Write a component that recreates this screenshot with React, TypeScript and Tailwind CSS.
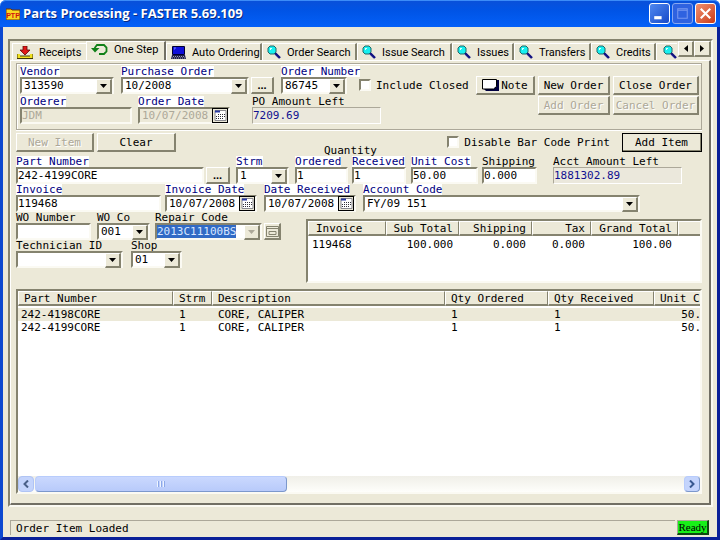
import type { ReactNode } from 'react';
import clsx from 'clsx';

const sunken = 'border-2 border-t-[#85836f] border-l-[#85836f] border-r-[#fbfaf3] border-b-[#fbfaf3]';
const raised = 'border-t border-l border-r-2 border-b-2 border-t-white border-l-white border-r-[#85836f] border-b-[#85836f]';

function SearchIcon() {
  return (
    <svg width="14" height="14" viewBox="0 0 14 14" className="shrink-0">
      <path d="M8 8l5 5" stroke="#101080" strokeWidth="2.4" />
      <path d="M7 9l4.500 4.500" stroke="#8a8ac0" strokeWidth="0.8" />
      <path d="M3 1h4l2 2v4L7 9H3L1 7V3z" fill="#18f0f0" stroke="#206868" />
      <path d="M3 3h2v1H4v1H3z" fill="#d8ffff" />
    </svg>
  );
}

function ReceiptIcon() {
  return (
    <svg width="16" height="13" viewBox="0 0 16 13" className="shrink-0">
      <path d="M0 8h3v2h10V8h3v5H0z" fill="#f0e020" />
      <path d="M0 12.500h16V8M0 8v4M3 10h10" stroke="#403808" fill="none" />
      <path d="M6 0h4v4h3L8 9 3 4h3z" fill="#e01818" stroke="#600808" strokeWidth="0.8" />
    </svg>
  );
}

function RefreshIcon() {
  return (
    <svg width="17" height="13" viewBox="0 0 17 13" className="shrink-0">
      <path d="M4 6.500V4.500l2-2.500h7l2.500 2.500v4L13 11H8" fill="none" stroke="#108018" strokeWidth="1.8" />
      <path d="M0 5h8.500L4 9.500z" fill="#108018" />
    </svg>
  );
}

function ComputerIcon() {
  return (
    <svg width="15" height="13" viewBox="0 0 15 13" className="shrink-0">
      <path d="M1.500.5h12v8h-12z" fill="#1010d8" stroke="#000030" />
      <path d="M3 2h2M3 3h1" stroke="#7080ff" />
      <path d="M1 9h13l1 4H0z" fill="#202048" />
      <path d="M2 10.500h11M1 12h13" stroke="#a0a0b8" strokeDasharray="1 1" />
    </svg>
  );
}

function CalendarIcon() {
  return (
    <svg width="13" height="11" viewBox="0 0 13 11">
      <path d="M1 .5h11v10H1z" fill="#fff" stroke="#8a8a90" />
      <path d="M1 1.500h5" stroke="#2838a0" strokeWidth="2" />
      <path d="M4 4.500h8M2 6.500h10M2 8.500h7" stroke="#303038" strokeDasharray="1 1" />
    </svg>
  );
}

function DropArrow({ disabled }: { disabled?: boolean }) {
  return (
    <span className={clsx('pointer-events-none absolute top-0.5 right-0.5 bottom-0 flex w-4 items-center justify-center bg-[#ece9d8]', raised)}>
      <svg width="7" height="4" viewBox="0 0 7 4">
        <path d="M0 0h7L3.500 4z" fill={disabled ? '#aca899' : '#000'} />
      </svg>
    </span>
  );
}

type FieldProps = { id: string; label: string; width: string; required?: boolean; children?: ReactNode };

function Field({ id, label, width, required, children }: FieldProps) {
  return (
    <div className={clsx('flex shrink-0 flex-col items-start', width)}>
      <label htmlFor={id} className={clsx('h-[11px] whitespace-nowrap', required && 'bg-white text-[#000080]')}>
        {label}
      </label>
      <div className="flex w-full">{children}</div>
    </div>
  );
}

function TextBox({ id, value, look = 'normal' }: { id: string; value?: string; look?: 'normal' | 'disabled' | 'amount' }) {
  return (
    <input
      id={id}
      defaultValue={value}
      disabled={look === 'disabled'}
      readOnly={look === 'amount'}
      className={clsx(
        'h-[17px] w-full min-w-0 outline-none',
        look === 'normal' && ['bg-white', sunken],
        look === 'disabled' && ['bg-[#ece9d8] text-[#aca899]', sunken],
        look === 'amount' && 'border border-t-[#aca899] border-l-[#aca899] border-r-white border-b-white bg-[#ebe8dc] text-[#101090]',
      )}
    />
  );
}

function Select({ id, value, selected }: { id: string; value: string; selected?: boolean }) {
  return (
    <div className="relative w-full">
      <select
        id={id}
        disabled={selected}
        className={clsx('block h-[17px] w-full appearance-none bg-white pl-0.5 opacity-100 outline-none', sunken)}
      >
        <option>{selected ? '' : value}</option>
      </select>
      {selected && (
        <span className="pointer-events-none absolute top-0.5 left-0.5 bg-[#316ac5] text-[#d8e6ff] leading-[13px]">{value}</span>
      )}
      <DropArrow disabled={selected} />
    </div>
  );
}

function DateBox({ id, value, disabled }: { id: string; value: string; disabled?: boolean }) {
  return (
    <div className={clsx('flex h-[17px] w-full items-center', sunken, disabled ? 'bg-[#ece9d8]' : 'bg-white')}>
      <input
        id={id}
        defaultValue={value}
        disabled={disabled}
        className={clsx('w-0 flex-1 pl-0.5 outline-none', disabled && 'text-[#aca899]')}
      />
      <button
        type="button"
        aria-label="Pick date"
        disabled={disabled}
        className="flex h-[15px] w-4 shrink-0 items-center justify-center border border-black bg-[#ece9d8]"
      >
        <CalendarIcon />
      </button>
    </div>
  );
}

type ButtonProps = { className?: string; disabled?: boolean; strong?: boolean; label?: string; children: ReactNode };

function Button({ className, disabled, strong, label, children }: ButtonProps) {
  return (
    <button
      type="button"
      disabled={disabled}
      aria-label={label}
      className={clsx(
        'flex shrink-0 items-center justify-center bg-[#ece9d8] whitespace-nowrap',
        raised,
        disabled && 'text-[#aca899] [text-shadow:1px_1px_0_#fff]',
        strong && 'outline outline-black -outline-offset-1',
        className,
      )}
    >
      {children}
    </button>
  );
}

function CheckBox({ label }: { label: string }) {
  return (
    <label className="flex h-[18px] shrink-0 items-center gap-[5px] whitespace-nowrap">
      <input type="checkbox" className={clsx('size-3 appearance-none bg-white', sunken)} />
      {label}
    </label>
  );
}

const tabs = [
  { name: 'Receipts', width: 'w-[74px]', icon: <ReceiptIcon /> },
  { name: 'One Step', width: 'w-[80px]', icon: <RefreshIcon />, active: true },
  { name: 'Auto Ordering', width: 'w-[96px]', icon: <ComputerIcon /> },
  { name: 'Order Search', width: 'w-[95px]', icon: <SearchIcon /> },
  { name: 'Issue Search', width: 'w-[95px]', icon: <SearchIcon /> },
  { name: 'Issues', width: 'w-[62px]', icon: <SearchIcon /> },
  { name: 'Transfers', width: 'w-[77px]', icon: <SearchIcon /> },
  { name: 'Credits', width: 'w-[65px]', icon: <SearchIcon /> },
];

function TabBar() {
  return (
    <div className="flex h-[19px] pl-0.5 font-['Roboto',sans-serif]">
      <div role="tablist" className="flex min-w-0 flex-1 items-end overflow-hidden">
        {tabs.map((tab) => (
          <button
            key={tab.name}
            type="button"
            role="tab"
            aria-selected={!!tab.active}
            className={clsx(
              'flex shrink-0 items-center gap-1.5 overflow-hidden border-t border-l border-white pl-1 whitespace-nowrap',
              tab.width,
              tab.active ? 'h-[19px] border-r-2 border-r-[#716f64] pb-1' : 'h-[17px]',
              !tab.active && tab.name !== 'Receipts' && 'border-r-2 border-r-[#85836f]',
            )}
          >
            {tab.icon}
            {tab.name}
          </button>
        ))}
        <button type="button" role="tab" aria-label="More" className="flex h-[17px] shrink-0 items-center border-t border-l border-white pl-1.5">
          <SearchIcon />
        </button>
      </div>
      <Button label="Scroll tabs left" className="h-4 w-4">
        <svg width="4" height="7" viewBox="0 0 4 7"><path d="M4 0v7L0 3.500z" /></svg>
      </Button>
      <Button label="Scroll tabs right" className="h-4 w-[17px]">
        <svg width="4" height="7" viewBox="0 0 4 7"><path d="M0 0v7l4-3.500z" /></svg>
      </Button>
    </div>
  );
}

function TitleBar() {
  return (
    <header className="flex h-[27px] items-center rounded-t-md bg-linear-to-b from-[#0a50d8] via-[#0054e6] via-40% to-[#0460f8] pr-1 pl-1.5 shadow-[inset_0_1px_0_#3c8cf8]">
      <svg width="14" height="12" viewBox="0 0 14 12">
        <path d="M0 1h5l1 1h8v10H0z" fill="#f8d820" stroke="#703008" />
        <text x="7" y="9.500" textAnchor="middle" fontSize="7" fontWeight="700" fontFamily="Liberation Sans" fill="#d01010">PTP</text>
      </svg>
      <h1 className="ml-[3px] flex-1 font-['Open_Sans',sans-serif] text-[13px] font-bold text-white [text-shadow:1px_1px_0_#0a2a80]">
        Parts Processing - FASTER 5.69.109
      </h1>
      <div className="flex gap-0.5">
        <button type="button" aria-label="Minimize" className="size-[21px] rounded-[3px] border border-white bg-linear-to-br from-[#5088f0] to-[#1848c8]">
          <svg viewBox="0 0 18 18"><path d="M4 13h7" stroke="#fff" strokeWidth="3" /></svg>
        </button>
        <button type="button" aria-label="Maximize" disabled className="size-[21px] rounded-[3px] border border-[#88a8f0] bg-[#2f62e0]">
          <svg viewBox="0 0 18 18"><path d="M4.500 4.500h9v9h-9zM4 6h10" fill="none" stroke="#7898f0" /></svg>
        </button>
        <button type="button" aria-label="Close" className="size-[21px] rounded-[3px] border border-white bg-linear-to-br from-[#f09070] to-[#c83810]">
          <svg viewBox="0 0 18 18"><path d="M4.500 4.500l9 9M13.500 4.500l-9 9" stroke="#fff" strokeWidth="2" /></svg>
        </button>
      </div>
    </header>
  );
}

function OrderBox() {
  return (
    <section className="flex justify-between border border-[#aca899] pr-0.5 pl-[3px] shadow-[inset_1px_1px_0_#fff,0_1px_0_#fff]">
      <div className="flex flex-col gap-0.5 pt-0.5 pb-[5px]">
        <div className="flex items-end">
          <Field id="vendor" label="Vendor" width="w-[94px] mr-[7px]" required>
            <Select id="vendor" value="313590" />
          </Field>
          <Field id="po" label="Purchase Order" width="w-[128px] mr-0.5" required>
            <Select id="po" value="10/2008" />
          </Field>
          <Button label="Find purchase order" className="mr-[7px] h-[17px] w-[23px] font-['Liberation_Sans',sans-serif] font-bold">...</Button>
          <Field id="order-number" label="Order Number" width="w-[66px] mr-3" required>
            <Select id="order-number" value="86745" />
          </Field>
          <CheckBox label="Include Closed" />
        </div>
        <div className="flex items-end">
          <Field id="orderer" label="Orderer" width="w-[112px] mr-1.5" required>
            <TextBox id="orderer" value="JDM" look="disabled" />
          </Field>
          <Field id="order-date" label="Order Date" width="w-[92px] mr-[22px]" required>
            <DateBox id="order-date" value="10/07/2008" disabled />
          </Field>
          <Field id="po-left" label="PO Amount Left" width="w-[129px]">
            <TextBox id="po-left" value="7209.69" look="amount" />
          </Field>
        </div>
      </div>
      <div className="grid grid-cols-[59px_72px_86px] grid-rows-[19px_19px] gap-x-[3px] gap-y-px pt-3">
        <Button className="gap-0.5">
          <svg width="17" height="12" viewBox="0 0 17 12">
            <path d="M2 1h15v11H4l-2-2z" fill="#000040" />
            <path d="M.5.5h14v7l-3 2.500H.5z" fill="#fff" stroke="#000" />
          </svg>
          Note
        </Button>
        <Button>New Order</Button>
        <Button>Close Order</Button>
        <Button className="col-start-2" disabled>Add Order</Button>
        <Button disabled>Cancel Order</Button>
      </div>
    </section>
  );
}

function ItemForm() {
  return (
    <section>
      <div className="mt-[3px] flex h-[19px] items-stretch">
        <Button className="mr-[3px] w-[78px]" disabled>New Item</Button>
        <Button className="w-[79px]">Clear</Button>
        <div className="mr-3 ml-auto flex">
          <CheckBox label="Disable Bar Code Print" />
        </div>
        <Button className="w-20" strong>Add Item</Button>
      </div>
      <div className="flex h-8 items-end">
        <Field id="part" label="Part Number" width="w-[188px] mr-0.5" required>
          <TextBox id="part" value="242-4199CORE" />
        </Field>
        <Button label="Find part" className="mr-1.5 h-[17px] w-6 font-['Liberation_Sans',sans-serif] font-bold">...</Button>
        <Field id="strm" label="Strm" width="w-[53px] mr-1.5" required>
          <Select id="strm" value="1" />
        </Field>
        <div className="mr-[5px] flex flex-col items-center">
          <span className="h-[11px]">Quantity</span>
          <div className="flex gap-1">
            <Field id="ordered" label="Ordered" width="w-[53px]" required>
              <TextBox id="ordered" value="1" />
            </Field>
            <Field id="received" label="Received" width="w-[54px]" required>
              <TextBox id="received" value="1" />
            </Field>
          </div>
        </div>
        <Field id="unit-cost" label="Unit Cost" width="w-[67px] mr-1" required>
          <TextBox id="unit-cost" value="50.00" />
        </Field>
        <Field id="shipping" label="Shipping" width="w-[55px] mr-4">
          <TextBox id="shipping" value="0.000" />
        </Field>
        <Field id="acct-left" label="Acct Amount Left" width="w-[129px]">
          <TextBox id="acct-left" value="1881302.89" look="amount" />
        </Field>
      </div>
      <div className="flex">
        <Field id="invoice" label="Invoice" width="w-[145px] mr-1" required>
          <TextBox id="invoice" value="119468" />
        </Field>
        <Field id="invoice-date" label="Invoice Date" width="w-[92px] mr-[7px]" required>
          <DateBox id="invoice-date" value="10/07/2008" />
        </Field>
        <Field id="date-received" label="Date Received" width="w-[92px] mr-[7px]" required>
          <DateBox id="date-received" value="10/07/2008" />
        </Field>
        <Field id="account" label="Account Code" width="w-[277px]" required>
          <Select id="account" value="FY/09 151" />
        </Field>
      </div>
    </section>
  );
}

function WorkOrderForm() {
  return (
    <div className="w-[290px] shrink-0">
      <div className="flex items-end">
        <Field id="wo" label="WO Number" width="w-[75px] mr-1.5">
          <TextBox id="wo" />
        </Field>
        <Field id="wo-co" label="WO Co" width="w-[53px] mr-[5px]">
          <Select id="wo-co" value="001" />
        </Field>
        <Field id="repair" label="Repair Code" width="w-[107px] mr-0.5">
          <Select id="repair" value="2013C11100BS" selected />
        </Field>
        <Button label="Repair code list" className="size-[17px]" disabled>
          <svg width="13" height="11" viewBox="0 0 13 11" fill="none" stroke="#85836f">
            <path d="M.5.500h12v10H.5zM0 2.500h13M3 5.500h7v3H3z" />
          </svg>
        </Button>
      </div>
      <div className="flex">
        <Field id="tech" label="Technician ID" width="w-[107px] mr-2">
          <Select id="tech" value="" />
        </Field>
        <Field id="shop" label="Shop" width="w-[51px]">
          <Select id="shop" value="01" />
        </Field>
      </div>
    </div>
  );
}

const headCell = 'border-t border-l border-r border-b-2 border-t-white border-l-white border-r-[#85836f] border-b-[#85836f] bg-[#ece9d8] px-[5px] font-normal';

function InvoiceTable() {
  return (
    <div className={clsx('mt-[7px] h-16 min-w-0 flex-1 overflow-hidden bg-white', sunken)}>
      <table className="w-full table-fixed border-separate border-spacing-0 text-right whitespace-nowrap">
        <thead>
          <tr className="h-[15px]">
            <th className={clsx(headCell, 'w-[78px] pl-[7px] text-left')}>Invoice</th>
            <th className={clsx(headCell, 'w-[73px]')}>Sub Total</th>
            <th className={clsx(headCell, 'w-[73px]')}>Shipping</th>
            <th className={clsx(headCell, 'w-[59px]')}>Tax</th>
            <th className={clsx(headCell, 'w-[87px]')}>Grand Total</th>
            <th className={clsx(headCell, 'border-r-0')} />
          </tr>
        </thead>
        <tbody>
          <tr className="h-4">
            <td className="pl-1 text-left">119468</td>
            <td className="pr-1.5">100.000</td>
            <td className="pr-1.5">0.000</td>
            <td className="pr-1.5">0.000</td>
            <td className="pr-1.5">100.00</td>
            <td />
          </tr>
        </tbody>
      </table>
    </div>
  );
}

const items = [
  { part: '242-4198CORE', strm: '1', description: 'CORE, CALIPER', ordered: '1', received: '1', cost: '50.000' },
  { part: '242-4199CORE', strm: '1', description: 'CORE, CALIPER', ordered: '1', received: '1', cost: '50.000' },
];

function ItemTable() {
  return (
    <section className={clsx('mt-1.5 flex flex-1 flex-col bg-white', sunken)}>
      <div className="w-0 min-w-full flex-1 overflow-hidden">
        <table className="w-[1700px] table-fixed border-separate border-spacing-0 text-left whitespace-nowrap">
          <thead>
            <tr className="h-[15px]">
              <th className={clsx(headCell, 'w-[155px]')}>Part Number</th>
              <th className={clsx(headCell, 'w-[39px]')}>Strm</th>
              <th className={clsx(headCell, 'w-[233px]')}>Description</th>
              <th className={clsx(headCell, 'w-[103px]')}>Qty Ordered</th>
              <th className={clsx(headCell, 'w-[106px]')}>Qty Received</th>
              <th className={clsx(headCell, 'w-[74px]')}>Unit Cost</th>
              <th className={headCell} />
            </tr>
          </thead>
          <tbody>
            <tr className="h-0.5"><td /></tr>
            {items.map((item) => (
              <tr key={item.part} className="h-[13px] odd:bg-white even:bg-[#ece9d8]">
                <td className="pl-[3px]">{item.part}</td>
                <td className="pl-1.5">{item.strm}</td>
                <td className="pl-1.5">{item.description}</td>
                <td className="pl-1.5">{item.ordered}</td>
                <td className="pl-1.5">{item.received}</td>
                <td className="pr-[7px] text-right">{item.cost}</td>
                <td />
              </tr>
            ))}
          </tbody>
        </table>
      </div>
      <div className="flex h-4 gap-px bg-linear-to-b from-[#f0efe8] to-[#fefefb]">
        <button type="button" aria-label="Scroll left" className="flex w-4 items-center justify-center rounded-sm border border-[#b0c4f4] bg-[#c4d4fc]">
          <svg width="6" height="8" viewBox="0 0 6 8"><path d="M5 0.500L1.500 4 5 7.500" fill="none" stroke="#4a6088" strokeWidth="2" /></svg>
        </button>
        <div className="flex w-[37%] items-center justify-center rounded-sm border border-t-[#b8ccfc] border-l-[#b8ccfc] border-r-[#7c98cc] border-b-[#7c98cc] bg-linear-to-b from-[#cad8fe] to-[#b8cafa]">
          <svg width="8" height="6" viewBox="0 0 8 6"><path d="M1.500 0v6M4.500 0v6M7.500 0v6" stroke="#8ca8e8" /><path d="M.5 0v6M3.500 0v6M6.500 0v6" stroke="#eef4fe" /></svg>
        </div>
        <button type="button" aria-label="Scroll right" className="ml-auto flex w-4 items-center justify-center rounded-sm border border-t-[#b8ccfc] border-l-[#b8ccfc] border-r-[#7c98cc] border-b-[#7c98cc] bg-[#c4d4fc]">
          <svg width="6" height="8" viewBox="0 0 6 8"><path d="M1 0.500L4.500 4 1 7.500" fill="none" stroke="#385890" strokeWidth="2" /></svg>
        </button>
      </div>
    </section>
  );
}

function App() {
  return (
    <div className="flex min-h-screen flex-col bg-white font-['DejaVu_Sans_Mono',monospace] text-[11px] leading-[11px] text-black">
      <TitleBar />
      <main className="flex flex-1 flex-col border-r-3 border-b-3 border-l-3 border-r-[#0a2098] border-b-[#0a2098] border-l-[#0c48d0] bg-[#ece9d8] pt-3 pr-1 pb-0.5 pl-[5px]">
        <div className="flex flex-1 flex-col border-t-2 border-r-2 border-b-2 border-l-2 border-t-[#85836f] border-r-[#fbfaf3] border-b-[#fbfaf3] border-l-[#85836f]">
          <TabBar />
          <div className="flex flex-1 flex-col border-t border-r-2 border-b-2 border-l border-t-white border-r-[#716f64] border-b-[#716f64] border-l-white pt-0.5 pr-[7px] pb-[9px] pl-[5px]">
            <OrderBox />
            <ItemForm />
            <div className="flex">
              <WorkOrderForm />
              <InvoiceTable />
            </div>
            <ItemTable />
          </div>
        </div>
        <footer className="mt-[13px] flex h-[15px] gap-0.5 pr-1 pl-0.5">
          <p className="flex flex-1 items-center border-t border-l border-[#aca899] pl-[5px]">Order Item Loaded</p>
          <p className="flex w-8 items-center justify-center border border-r-2 border-b-2 border-t-[#aca899] border-l-[#aca899] border-r-[#104810] border-b-[#104810] bg-[#18f018] font-['Liberation_Serif',serif]">
            Ready
          </p>
        </footer>
      </main>
    </div>
  );
}

export default App;
